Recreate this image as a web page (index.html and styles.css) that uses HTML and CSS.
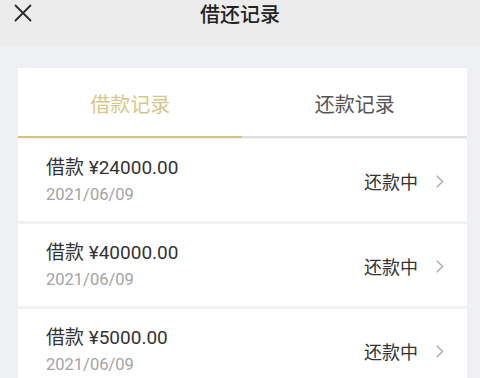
FILE: index.html
```html
<!DOCTYPE html>
<html lang="zh">
<head>
<meta charset="utf-8">
<title>借还记录</title>
<link rel="stylesheet" href="styles.css">
</head>
<body>
<header class="topbar">
  <div class="bar-row">
    <svg class="close" width="18" height="18" viewBox="0 0 18 18"><path d="M1.5 1.5 L16.5 16.5 M16.5 1.5 L1.5 16.5" stroke="#2b2b2b" stroke-width="1.8" fill="none" stroke-linecap="round"/></svg>
    <h1 class="title">借还记录</h1>
  </div>
</header>
<main class="card">
  <nav class="tabs">
    <div class="tab active">借款记录</div>
    <div class="tab">还款记录</div>
  </nav>
  <div class="tab-line"><span class="tab-line-active"></span></div>
  <ul class="list">
    <li class="row">
      <div class="info">
        <div class="amount">借款 ¥24000.00</div>
        <div class="date">2021/06/09</div>
      </div>
      <div class="status">还款中</div>
      <svg class="chev" width="8" height="13" viewBox="0 0 8 13"><path d="M1.2 1.2 L6.6 6.5 L1.2 11.8" stroke="#b0b0b0" stroke-width="1.6" fill="none" stroke-linecap="round" stroke-linejoin="round"/></svg>
    </li>
    <li class="row">
      <div class="info">
        <div class="amount">借款 ¥40000.00</div>
        <div class="date">2021/06/09</div>
      </div>
      <div class="status">还款中</div>
      <svg class="chev" width="8" height="13" viewBox="0 0 8 13"><path d="M1.2 1.2 L6.6 6.5 L1.2 11.8" stroke="#b0b0b0" stroke-width="1.6" fill="none" stroke-linecap="round" stroke-linejoin="round"/></svg>
    </li>
    <li class="row">
      <div class="info">
        <div class="amount">借款 ¥5000.00</div>
        <div class="date">2021/06/09</div>
      </div>
      <div class="status">还款中</div>
      <svg class="chev" width="8" height="13" viewBox="0 0 8 13"><path d="M1.2 1.2 L6.6 6.5 L1.2 11.8" stroke="#b0b0b0" stroke-width="1.6" fill="none" stroke-linecap="round" stroke-linejoin="round"/></svg>
    </li>
  </ul>
</main>
</body>
</html>
```

FILE: styles.css
```css
* { box-sizing: border-box; }
html, body { margin: 0; padding: 0; }
body {
  background: #eef0f3;
  font-family: Roboto, "Noto Sans CJK SC", sans-serif;
  color: #333;
  width: 480px;
  height: 378px;
  overflow: hidden;
}
.topbar {
  height: 45px;
  background: #ececec;
}
.bar-row {
  position: relative;
  height: 30px;
  display: flex;
  align-items: center;
  justify-content: center;
}
.close {
  position: absolute;
  left: 14px;
  top: 4px;
}
.title {
  margin: 0;
  font-size: 20px;
  font-weight: 500;
  color: #222;
  line-height: 30px;
}
.card {
  margin: 23px 13px 0 18px;
  background: #fff;
}
.tabs {
  display: flex;
  height: 68px;
}
.tab {
  flex: 1;
  display: flex;
  align-items: center;
  justify-content: center;
  font-size: 20px;
  color: #555;
  padding-top: 2px;
}
.tab.active { color: #d7c78a; }
.tab-line {
  height: 2px;
  background: #dedfe1;
  display: flex;
}
.tab-line-active {
  width: 224px;
  background: #d6c47e;
}
.list {
  list-style: none;
  margin: 0;
  padding: 1px 0 0;
  background: #f0f1f3;
}
.row {
  display: flex;
  align-items: center;
  height: 82px;
  background: #fff;
  padding: 0 23px 0 28px;
  margin-bottom: 3px;
}
.info {
  flex: 1;
  display: flex;
  flex-direction: column;
  gap: 5px;
}
.amount {
  font-size: 19px;
  line-height: 25px;
  color: #333;
}
.date {
  font-size: 16.5px;
  line-height: 20px;
  color: #a3a3a3;
}
.status {
  font-size: 18px;
  color: #333;
  margin-right: 18px;
  margin-top: 2px;
}
.chev { margin-top: 2px; }
```
